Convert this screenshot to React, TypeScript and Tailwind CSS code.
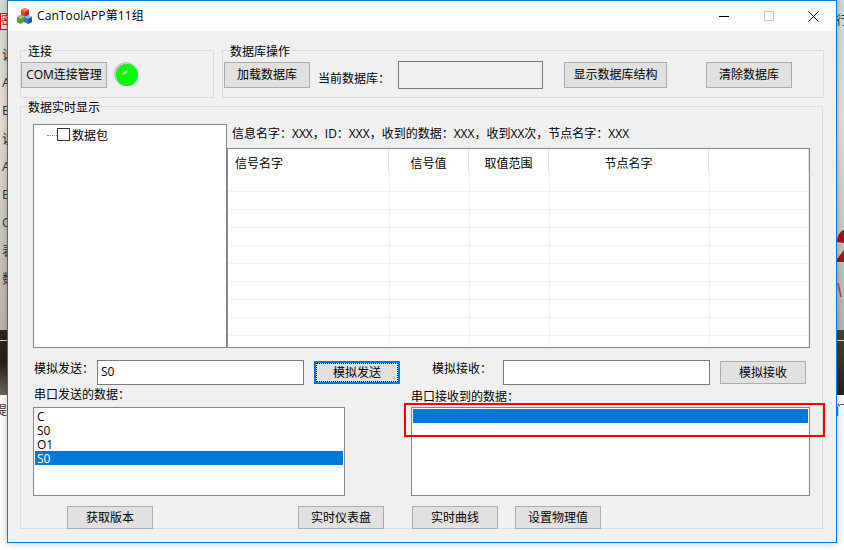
const ui = '"Open Sans", "Noto Sans CJK SC", sans-serif';

function Btn({ label, className = "" }: { label: string; className?: string }) {
  return (
    <button className={`h-[23px] w-[86px] shrink-0 border border-[#adadad] bg-[#e1e1e1] text-[12px] leading-none text-black ${className}`}>
      {label}
    </button>
  );
}

function Group({ title, className = "", children }: { title: string; className?: string; children: React.ReactNode }) {
  return (
    <div className={`relative border border-[#dcdcdc] ${className}`}>
      <span className="absolute left-[6px] top-[-7px] bg-[#f0f0f0] px-px text-[12px] leading-[15px] text-black">{title}</span>
      {children}
    </div>
  );
}

function AppIcon() {
  return (
    <svg width="17" height="18" viewBox="0 0 17 18" className="shrink-0">
      <path d="M5 3l4-2 4 2v5l-4 2-4-2z" fill="#d9442c" />
      <path d="M9 1l4 2-4 2-4-2z" fill="#ef7f62" />
      <path d="M9 5l4-2v5l-4 2z" fill="#a92b1c" />
      <path d="M1 10l3.500-2 3.500 2v5l-3.500 2-3.500-2z" fill="#5a9a3c" />
      <path d="M4.500 8l3.500 2-3.500 2-3.500-2z" fill="#9ccb6c" />
      <path d="M8 10l4-2 4 2v5l-4 2-4-2z" fill="#2c7cc0" />
      <path d="M12 8l4 2-4 2-4-2z" fill="#7dbbe8" />
      <path d="M12 12l4-2v5l-4 2z" fill="#1b5c99" />
    </svg>
  );
}

function Led() {
  return (
    <svg width="26" height="26" viewBox="0 0 26 26" className="ml-[7px] shrink-0">
      <circle cx="12" cy="12" r="12" fill="#c4c4c4" />
      <circle cx="13" cy="13" r="11" fill="#00ff00" />
      <path d="M9 11.500l4-2.500" stroke="#ffffff" strokeWidth="2" />
    </svg>
  );
}

const rowLines = [0, 1, 2, 3, 4, 5, 6, 7, 8];
const bodyCols = ["w-[162px]", "w-[80px]", "w-[80px]", "w-[160px]", "flex-1"];

function SignalTable() {
  const headCols = ["w-[161px] pl-[7px] text-left", "w-[80px] text-center", "w-[80px] text-center", "w-[160px] text-center", "flex-1"];
  const labels = ["信号名字", "信号值", "取值范围", "节点名字", ""];
  return (
    <div className="h-[200px] overflow-hidden border border-[#828790] bg-white">
      <div className="flex h-[24px]">
        {labels.map((l, i) => (
          <div key={i} className={`${headCols[i]} border-r border-[#e5e5e5] text-[12px] leading-[29px]`}>{l}</div>
        ))}
      </div>
      <div className="flex h-[19px] border-b border-[#f0f0f0]">
        {bodyCols.map((c, i) => <div key={i} className={`${c} border-r border-[#f0f0f0]`} />)}
      </div>
      {rowLines.map((r) => (
        <div key={r} className="flex h-[18px] border-b border-[#f0f0f0]">
          {bodyCols.map((c, i) => <div key={i} className={`${c} border-r border-[#f0f0f0]`} />)}
        </div>
      ))}
    </div>
  );
}

function ListBox({ items, selected, className = "" }: { items: string[]; selected: number; className?: string }) {
  return (
    <div className={`h-[89px] border border-[#828790] bg-white p-px ${className}`}>
      {items.map((item, i) => (
        <div key={i} className={`h-[14px] overflow-hidden pl-[2px] text-[12px] leading-[16px] ${i === selected ? "bg-[#0078d7] text-white" : "text-black"}`}>
          {item}
        </div>
      ))}
    </div>
  );
}

export default function App() {
  return (
    <div className="relative h-[550px] w-[844px] overflow-hidden bg-[#f4f4f4]" style={{ fontFamily: ui }}>
      {/* desktop behind the window */}
      <div className="absolute left-0 top-0 h-[330px] w-[844px] bg-[linear-gradient(180deg,#cfdcda_0%,#e6e0d8_35%,#c9c6c0_75%,#b9b6b0_100%)]" />
      <div className="absolute left-0 top-[330px] h-[65px] w-[420px] bg-[linear-gradient(180deg,#2c2620_0%,#2a211a_50%,#66695f_100%)]" />
      <div className="absolute left-[420px] top-[330px] h-[65px] w-[424px] bg-[linear-gradient(180deg,#4a4530_0%,#3a3326_50%,#26201a_100%)]" />
      <div className="absolute left-0 top-[340px] h-px w-[844px] bg-[#d8d8d0]" />
      <div className="absolute left-0 top-[395px] h-[155px] w-[844px] bg-white" />
      <div className="absolute left-0 top-[13px] h-[17px] w-[8px] overflow-hidden border border-[#c8141c] bg-[#f7d8d8] text-[12px] leading-[14px] text-[#c8141c]">密</div>
      {["说", "A", "B", "说", "A", "B", "C", "表", "数"].map((c, i) => (
        <span key={i} className="absolute left-[2px] text-[13px] leading-[16px] text-[#333]" style={{ top: 46 + i * 28 }}>{c}</span>
      ))}
      <span className="absolute left-[-5px] top-[403px] text-[12px] leading-[16px] text-[#333]">提</span>
      <span className="absolute left-[836px] top-[13px] text-[12px] leading-[16px] text-[#333]">行</span>
      <span className="absolute left-[836px] top-[403px] text-[12px] leading-[16px] text-[#333]">门</span>
      <svg width="8" height="70" viewBox="0 0 8 70" className="absolute left-[836px] top-[228px]">
        <path d="M1 14C1 8 4 3 8 2v13z" fill="#a81414" />
        <path d="M1 31L8 22v12H1z" fill="#a81414" />
        <path d="M2 55l3 14" stroke="#c04040" strokeWidth="1.500" fill="none" />
      </svg>

      {/* CanTool window */}
      <div className="absolute left-[7px] top-0 flex h-[543px] w-[830px] flex-col border border-[#0078d7] bg-[#f0f0f0] shadow-[0_0_8px_rgba(0,0,0,0.25)]">
        <div className="flex h-[30px] shrink-0 items-center bg-white pl-[8px] text-[12px] text-black">
          <AppIcon />
          <span className="ml-[4px] text-[12px] tracking-[0.1px]">CanToolAPP第11组</span>
          <div className="ml-auto flex h-full">
            <div className="flex w-[45px] items-center justify-center">
              <svg width="10" height="10" viewBox="0 0 10 10"><path d="M0 5.500h10" stroke="#000" /></svg>
            </div>
            <div className="flex w-[45px] items-center justify-center">
              <svg width="10" height="10" viewBox="0 0 10 10"><rect x="0.500" y="0.500" width="9" height="9" fill="none" stroke="#cccccc" /></svg>
            </div>
            <div className="flex w-[45px] items-center justify-center">
              <svg width="11" height="11" viewBox="0 0 11 11"><path d="M0.500 0.500l10 10M10.500 0.500l-10 10" stroke="#000" /></svg>
            </div>
          </div>
        </div>

        <div className="flex flex-col pl-[12px] pt-[19px] text-[12px] text-black">
          <div className="flex">
            <Group title="连接" className="h-[48px] w-[194px]">
              <div className="flex items-center pt-[11px]">
                <Btn label="COM连接管理" className="h-[26px]" />
                <Led />
              </div>
            </Group>
            <Group title="数据库操作" className="ml-[8px] h-[48px] w-[602px]">
              <div className="flex items-start pl-px pt-[11px]">
                <Btn label="加载数据库" className="h-[26px]" />
                <span className="ml-[8px] mt-[9px] leading-[16px]">当前数据库：</span>
                <div className="ml-[8px] mt-[-1px] h-[28px] w-[145px] border border-[#7a7a7a] bg-[#f0f0f0]" />
                <Btn label="显示数据库结构" className="ml-[21px] h-[26px] w-[103px]" />
                <Btn label="清除数据库" className="ml-[39px] h-[26px]" />
              </div>
            </Group>
          </div>

          <Group title="数据实时显示" className="mt-[8px] h-[423px] w-[803px]">
            <div className="pl-[12px] pt-[17px]">
              <div className="flex h-[224px]">
                <div className="flex h-full w-[194px] items-start border border-[#828790] bg-white pl-[13px] pt-[3px]">
                  <span className="mt-[7px] w-[10px] border-t border-dotted border-[#888]" />
                  <span className="h-[13px] w-[13px] border border-[#333] bg-white" />
                  <span className="ml-[2px] leading-[15px]">数据包</span>
                </div>
                <div className="w-[583px]">
                  <div className="h-[24px] pl-[5px] leading-[20px]">信息名字：XXX，ID：XXX，收到的数据：XXX，收到XX次，节点名字：XXX</div>
                  <SignalTable />
                </div>
              </div>

              <div className="mt-[12px] flex items-start">
                <span className="ml-px w-[63px] leading-[17px]">模拟发送：</span>
                <div className="h-[25px] w-[207px] border border-[#7a7a7a] bg-white pl-[3px] leading-[21px]">S0</div>
                <button className="ml-[10px] mt-px h-[23px] w-[86px] border-2 border-[#0078d7] bg-[#e1e1e1] text-[12px] leading-none outline-1 -outline-offset-3 outline-black outline-dotted">模拟发送</button>
                <span className="ml-[32px] w-[71px] leading-[17px]">模拟接收：</span>
                <div className="h-[25px] w-[207px] border border-[#7a7a7a] bg-white" />
                <Btn label="模拟接收" className="ml-[10px] mt-px" />
              </div>

              <div className="mt-[2px] flex">
                <div className="w-[312px]">
                  <div className="ml-px h-[20px] leading-[15px]">串口发送的数据：</div>
                  <ListBox items={["C", "S0", "O1", "S0"]} selected={3} />
                </div>
                <div className="ml-[66px] w-[399px]">
                  <div className="h-[20px] pt-[2px] leading-[15px]">串口接收到的数据：</div>
                  <ListBox items={[""]} selected={0} />
                </div>
              </div>

              <div className="mt-[10px] flex">
                <Btn label="获取版本" className="ml-[34px]" />
                <Btn label="实时仪表盘" className="ml-[145px]" />
                <Btn label="实时曲线" className="ml-[28px]" />
                <Btn label="设置物理值" className="ml-[17px]" />
              </div>
            </div>
          </Group>
        </div>

        {/* annotation drawn over the screenshot */}
        <div className="absolute left-[396px] top-[402px] h-[34px] w-[421px] border-2 border-[#ff0000]" />
      </div>
    </div>
  );
}
